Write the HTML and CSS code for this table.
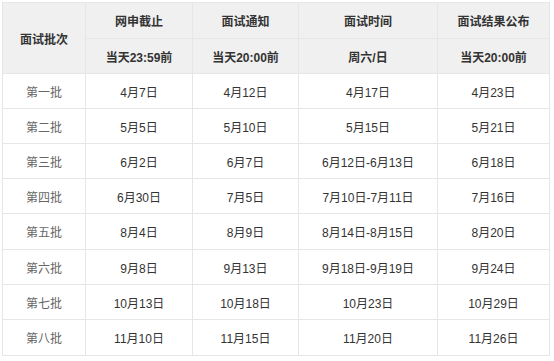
FILE: index.html
```html
<!DOCTYPE html>
<html>
<head>
    <title>面试安排</title>
    <link rel="stylesheet" href="styles.css">
</head>
<body>
    <table class="schedule">
        <colgroup>
            <col class="c-batch">
            <col class="c-apply">
            <col class="c-notice">
            <col class="c-time">
            <col class="c-result">
        </colgroup>
        <thead>
            <tr class="h1">
                <th rowspan="2">面试批次</th>
                <th>网申截止</th>
                <th>面试通知</th>
                <th>面试时间</th>
                <th>面试结果公布</th>
            </tr>
            <tr class="h2">
                <th>当天23:59前</th>
                <th>当天20:00前</th>
                <th>周六/日</th>
                <th>当天20:00前</th>
            </tr>
        </thead>
        <tbody>
            <tr><td class="batch">第一批</td><td>4月7日</td><td>4月12日</td><td>4月17日</td><td>4月23日</td></tr>
            <tr><td class="batch">第二批</td><td>5月5日</td><td>5月10日</td><td>5月15日</td><td>5月21日</td></tr>
            <tr><td class="batch">第三批</td><td>6月2日</td><td>6月7日</td><td>6月12日-6月13日</td><td>6月18日</td></tr>
            <tr><td class="batch">第四批</td><td>6月30日</td><td>7月5日</td><td>7月10日-7月11日</td><td>7月16日</td></tr>
            <tr class="tall"><td class="batch">第五批</td><td>8月4日</td><td>8月9日</td><td>8月14日-8月15日</td><td>8月20日</td></tr>
            <tr><td class="batch">第六批</td><td>9月8日</td><td>9月13日</td><td>9月18日-9月19日</td><td>9月24日</td></tr>
            <tr><td class="batch">第七批</td><td>10月13日</td><td>10月18日</td><td>10月23日</td><td>10月29日</td></tr>
            <tr class="tall"><td class="batch">第八批</td><td>11月10日</td><td>11月15日</td><td>11月20日</td><td>11月26日</td></tr>
        </tbody>
    </table>
</body>
</html>
```

FILE: styles.css
```css
body { margin: 0; padding: 2px 0 0 2px; background: #fff; font-family: "Liberation Sans", Arial, "Noto Sans CJK SC", sans-serif; font-size: 12px; color: #333; }
.schedule { border-collapse: collapse; table-layout: fixed; width: 547px; }
.c-batch { width: 83px; }
.c-apply { width: 107px; }
.c-notice { width: 106px; }
.c-time { width: 139px; }
.c-result { width: 112px; }
.schedule th, .schedule td { border: 1px solid #e6e6e6; text-align: center; vertical-align: middle; padding: 0; }
.schedule th { background: #f0f0f0; font-weight: bold; color: #333; }
.h1 { height: 36px; }
.h2 { height: 35px; }
.schedule tbody tr { height: 35px; }
.schedule tbody tr.tall { height: 36px; }
.batch { color: #666; }
```
